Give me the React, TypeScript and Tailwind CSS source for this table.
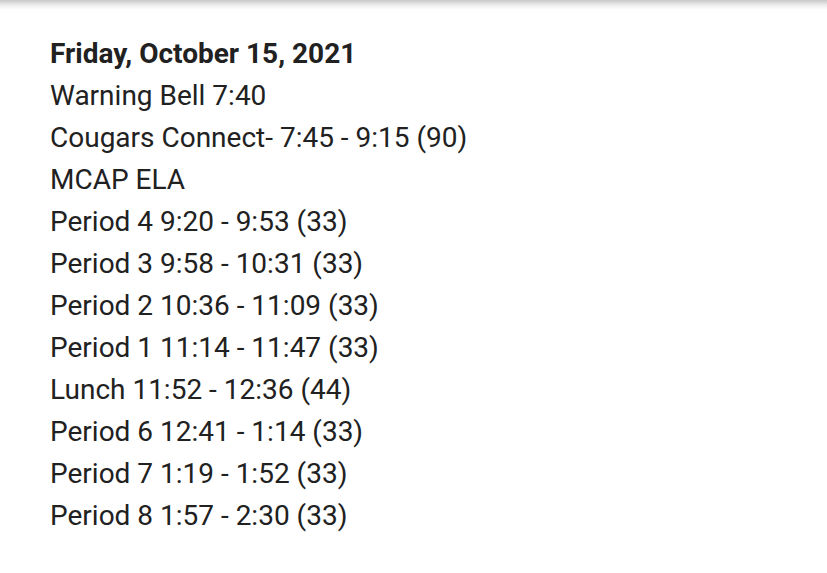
import React from 'react';

const lines = [
  'Warning Bell 7:40',
  'Cougars Connect- 7:45 - 9:15 (90)',
  'MCAP ELA',
  'Period 4 9:20 - 9:53 (33)',
  'Period 3 9:58 - 10:31 (33)',
  'Period 2 10:36 - 11:09 (33)',
  'Period 1 11:14 - 11:47 (33)',
  'Lunch 11:52 - 12:36 (44)',
  'Period 6 12:41 - 1:14 (33)',
  'Period 7 1:19 - 1:52 (33)',
  'Period 8 1:57 - 2:30 (33)',
];

export default function App() {
  return (
    <div className="w-[827px] h-[573px] bg-white overflow-hidden relative" style={{ fontFamily: 'Roboto, "Liberation Sans", sans-serif' }}>
      <div className="absolute top-0 left-0 right-0 h-[10px] bg-gradient-to-b from-[#c8c8c8] via-[#ececec] to-white" />
      <div className="pl-[50px] pt-[33px] text-[#212121] text-[28px] leading-[42px]">
        <div className="font-bold">Friday, October 15, 2021</div>
        {lines.map((l) => (
          <div key={l}>{l}</div>
        ))}
      </div>
    </div>
  );
}
